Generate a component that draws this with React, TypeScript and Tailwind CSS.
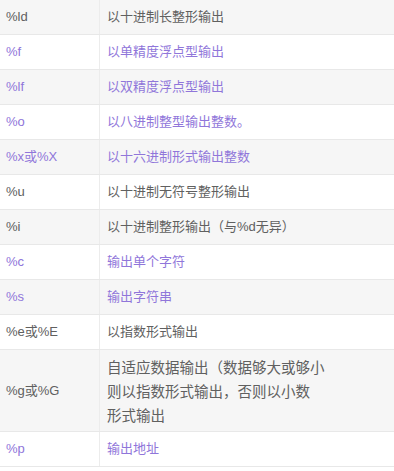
const rows: { fmt: string; desc: string[]; link?: boolean }[] = [
  { fmt: '%ld', desc: ['以十进制长整形输出'] },
  { fmt: '%f', desc: ['以单精度浮点型输出'], link: true },
  { fmt: '%lf', desc: ['以双精度浮点型输出'], link: true },
  { fmt: '%o', desc: ['以八进制整型输出整数。'], link: true },
  { fmt: '%x或%X', desc: ['以十六进制形式输出整数'], link: true },
  { fmt: '%u', desc: ['以十进制无符号整形输出'] },
  { fmt: '%i', desc: ['以十进制整形输出（与%d无异）'] },
  { fmt: '%c', desc: ['输出单个字符'], link: true },
  { fmt: '%s', desc: ['输出字符串'], link: true },
  { fmt: '%e或%E', desc: ['以指数形式输出'] },
  {
    fmt: '%g或%G',
    desc: ['自适应数据输出（数据够大或够小', '则以指数形式输出，否则以小数', '形式输出'],
  },
  { fmt: '%p', desc: ['输出地址'], link: true },
];

export default function App() {
  return (
    <div
      className="w-[394px] h-[471px] bg-white overflow-hidden"
      style={{ fontFamily: '"Liberation Sans", "Noto Sans CJK SC", sans-serif' }}
    >
      {rows.map((r, i) => {
        const multi = r.desc.length > 1;
        return (
          <div
            key={r.fmt}
            className={`flex border-b border-[#e8e8e8] ${i % 2 === 0 ? 'bg-[#f6f6f6]' : 'bg-white'} ${
              multi ? 'h-[82px]' : 'h-[35px]'
            }`}
          >
            <div
              className={`w-[100px] shrink-0 flex items-center pl-[6px] text-[13px] border-r border-[#ececec] ${
                r.link ? 'text-[#9076da]' : 'text-[#606060]'
              }`}
            >
              {r.fmt}
            </div>
            <div
              className={`flex flex-col justify-center pl-[7px] ${
                multi ? 'text-[14.5px] leading-[24px] pt-[2px]' : 'text-[13px]'
              } ${r.link ? 'text-[#9076da]' : 'text-[#606060]'}`}
            >
              {r.desc.map((d) => (
                <span key={d}>{d}</span>
              ))}
            </div>
          </div>
        );
      })}
    </div>
  );
}
